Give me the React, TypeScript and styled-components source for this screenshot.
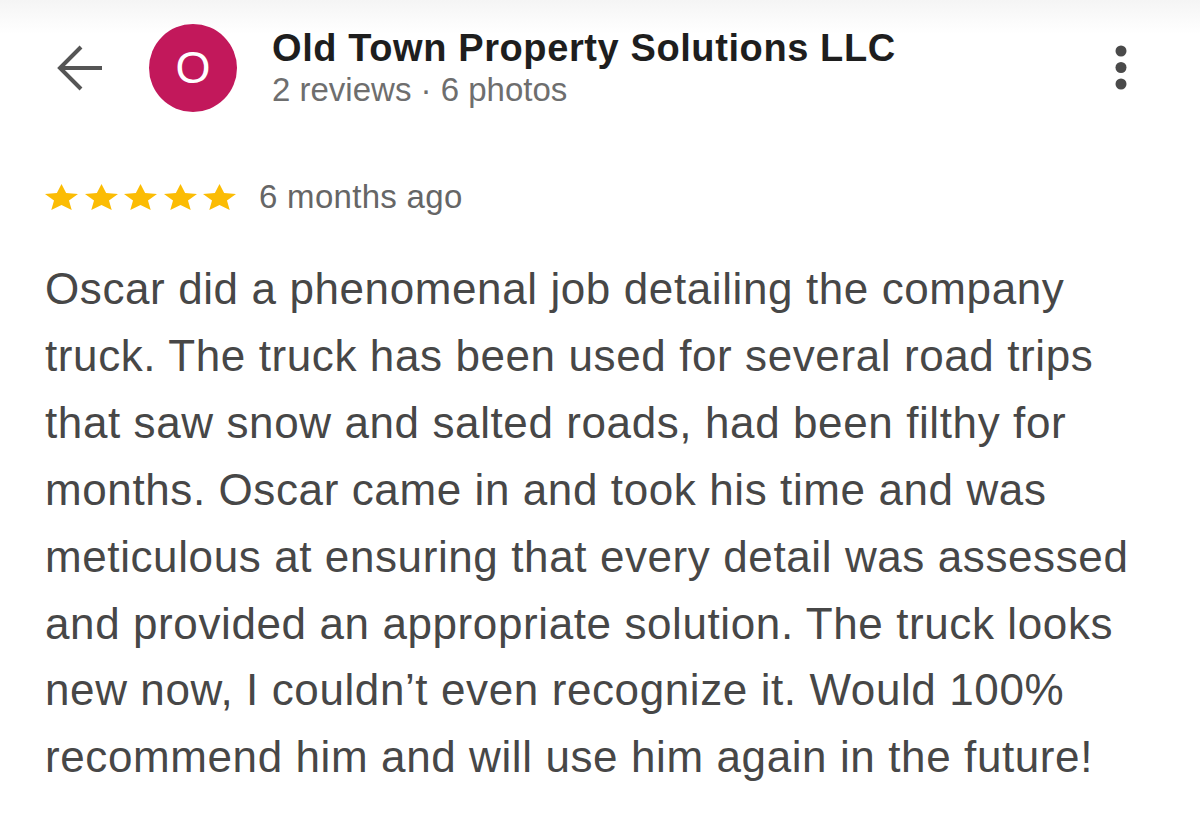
import styled, { createGlobalStyle } from "styled-components";

const GlobalStyle = createGlobalStyle`
  html, body {
    margin: 0;
    padding: 0;
    background: #ffffff;
  }
  body {
    font-family: "Liberation Sans", Arial, sans-serif;
    -webkit-font-smoothing: antialiased;
  }
`;

const Page = styled.main`
  width: 1200px;
  min-height: 824px;
  background: linear-gradient(#f5f5f5 0px, #ffffff 34px);
`;

const Header = styled.header`
  display: flex;
  align-items: center;
  padding: 24px 73px 0 57px;
`;

const BackButton = styled.button`
  display: flex;
  align-items: center;
  padding: 0;
  margin: 0 46px 0 0;
  border: none;
  background: none;
  color: #555555;
`;

const Avatar = styled.div`
  width: 88px;
  height: 88px;
  border-radius: 50%;
  background: #c2185b;
  color: #ffffff;
  display: flex;
  align-items: center;
  justify-content: center;
  font-size: 45px;
  margin-right: 35px;
  flex-shrink: 0;
`;

const TitleBlock = styled.div`
  flex: 1;
  display: flex;
  flex-direction: column;
  gap: 2px;

  h1 {
    margin: 0;
    font-size: 38px;
    line-height: 42px;
    font-weight: 700;
    letter-spacing: 0.6px;
    color: #1e1e1e;
  }

  p {
    margin: 0;
    font-size: 33px;
    line-height: 38px;
    color: #6e6e6e;
  }
`;

const MenuButton = styled.button`
  display: flex;
  padding: 0;
  border: none;
  background: none;
  color: #4a4a4a;
`;

const Review = styled.section`
  padding: 67px 45px 0 45px;
`;

const RatingRow = styled.div`
  display: flex;
  align-items: center;
  height: 36px;
`;

const Stars = styled.div`
  display: flex;
  gap: 6.5px;
  margin-right: 23px;
`;

const When = styled.span`
  font-size: 33px;
  line-height: 36px;
  letter-spacing: 0.3px;
  color: #666666;
`;

const Body = styled.p`
  margin: 41px 0 0 0;
  font-size: 44px;
  line-height: 66.9px;
  letter-spacing: 0.6px;
  color: #474747;
  white-space: nowrap;
`;

const Star = () => (
  <svg width="33" height="26" viewBox="2 2 20 19" preserveAspectRatio="none">
    <path
      fill="#fbbc04"
      d="M12 17.27L18.18 21l-1.64-7.03L22 9.24l-7.19-.61L12 2 9.19 8.63 2 9.24l5.46 4.73L5.82 21z"
    />
  </svg>
);

const lines = [
  "Oscar did a phenomenal job detailing the company",
  "truck. The truck has been used for several road trips",
  "that saw snow and salted roads, had been filthy for",
  "months. Oscar came in and took his time and was",
  "meticulous at ensuring that every detail was assessed",
  "and provided an appropriate solution. The truck looks",
  "new now, I couldn\u2019t even recognize it. Would 100%",
  "recommend him and will use him again in the future!",
];

export default function App() {
  return (
    <Page>
      <GlobalStyle />
      <Header>
        <BackButton aria-label="Back">
          <svg width="46" height="48" viewBox="0 0 46 48" fill="none">
            <path
              d="M24 3 L3 24 L24 45 M3 24 H45"
              stroke="currentColor"
              strokeWidth="4"
            />
          </svg>
        </BackButton>
        <Avatar>O</Avatar>
        <TitleBlock>
          <h1>Old Town Property Solutions LLC</h1>
          <p>2 reviews · 6 photos</p>
        </TitleBlock>
        <MenuButton aria-label="More options">
          <svg width="12" height="46" viewBox="0 0 12 46">
            <circle cx="6" cy="6" r="5.5" fill="currentColor" />
            <circle cx="6" cy="22.5" r="5.5" fill="currentColor" />
            <circle cx="6" cy="39" r="5.5" fill="currentColor" />
          </svg>
        </MenuButton>
      </Header>
      <Review>
        <RatingRow>
          <Stars>
            {[0, 1, 2, 3, 4].map((i) => (
              <Star key={i} />
            ))}
          </Stars>
          <When>6 months ago</When>
        </RatingRow>
        <Body>
          {lines.map((line, i) => (
            <span key={i}>
              {line}
              {i < lines.length - 1 && <br />}
            </span>
          ))}
        </Body>
      </Review>
    </Page>
  );
}
